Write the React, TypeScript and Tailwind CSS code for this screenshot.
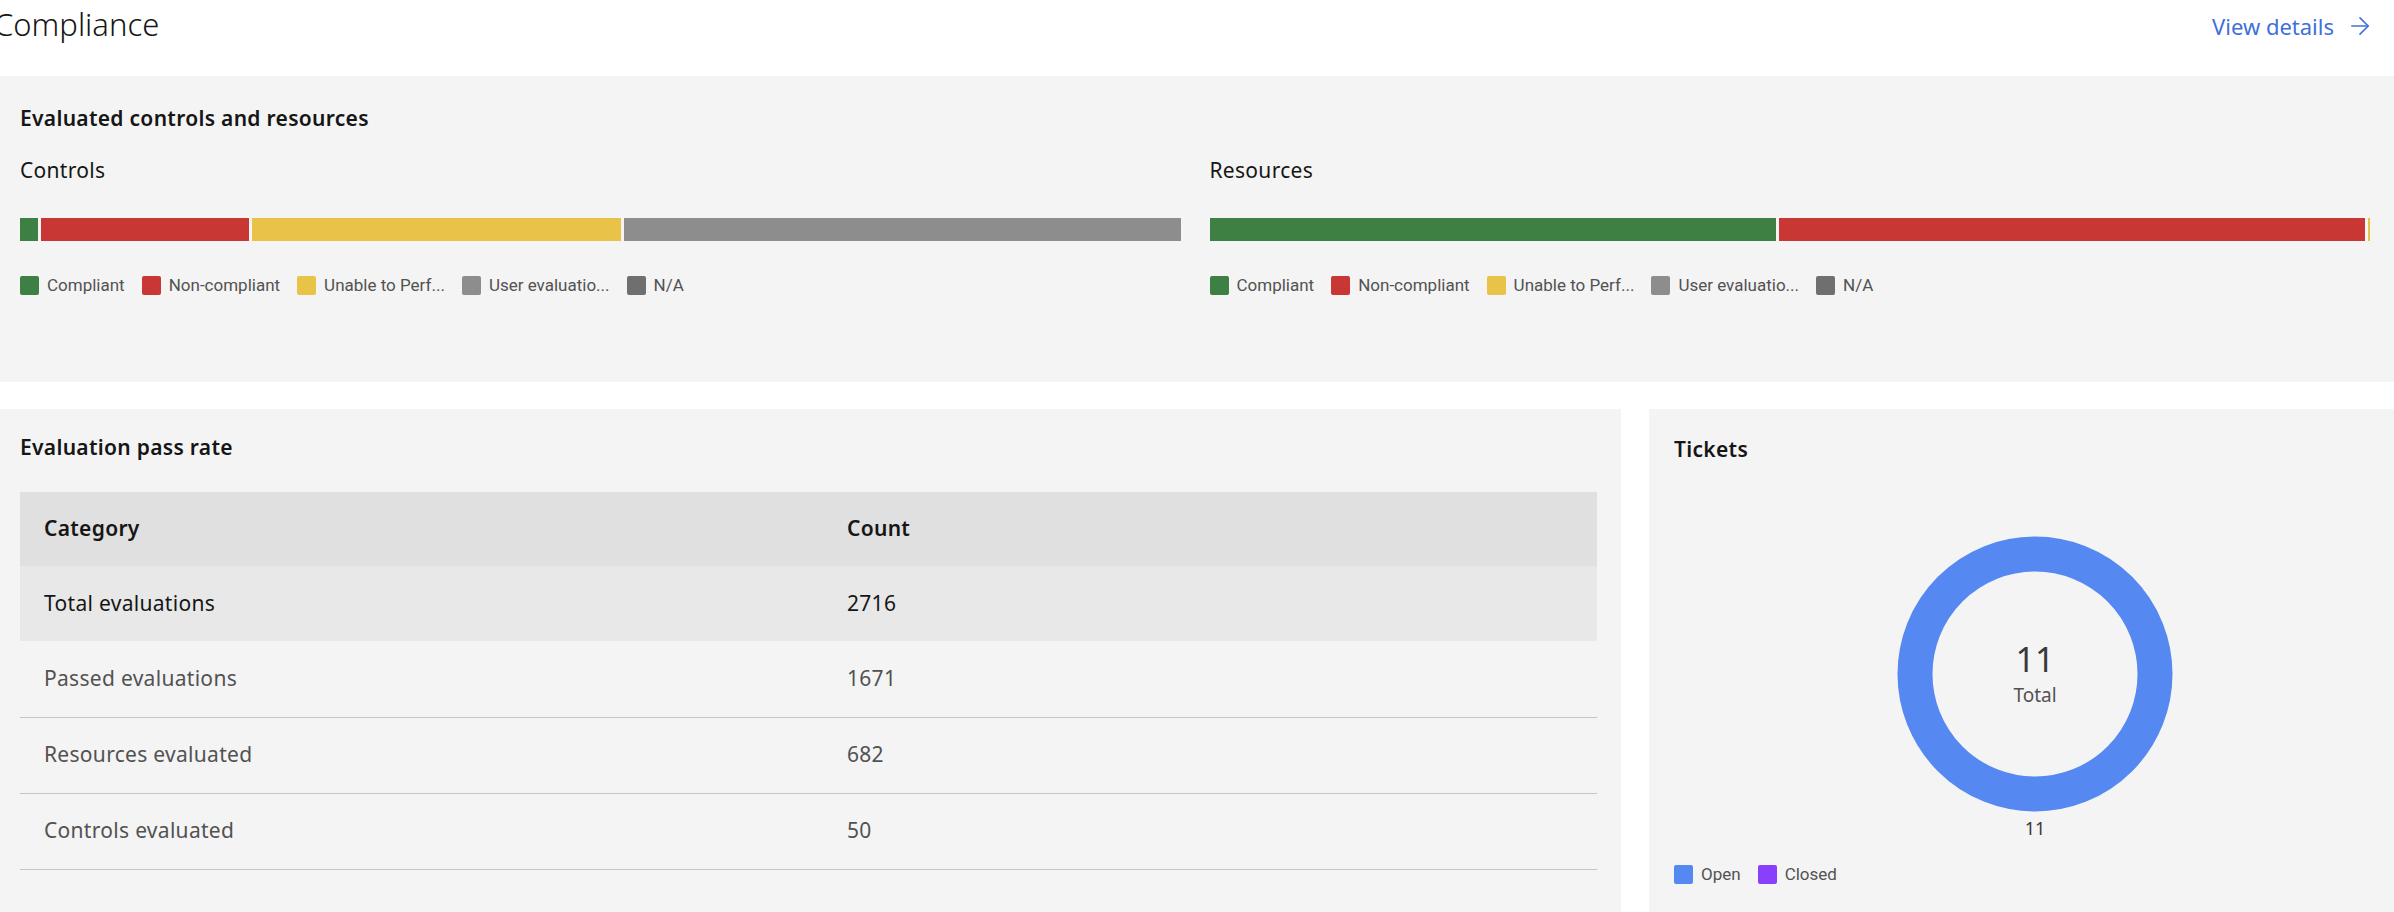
import { ArrowRight } from "lucide-react";

interface Segment {
  color: string;
  width: number;
}

const legend = [
  { label: "Compliant", color: "bg-[#3e7f43]" },
  { label: "Non-compliant", color: "bg-[#c93735]" },
  { label: "Unable to Perf...", color: "bg-[#e9c348]" },
  { label: "User evaluatio...", color: "bg-[#8d8d8d]" },
  { label: "N/A", color: "bg-[#6f6f6f]" },
];

const controls: Segment[] = [
  { color: "#3e7f43", width: 18 },
  { color: "#c93735", width: 208 },
  { color: "#e9c348", width: 369 },
  { color: "#8d8d8d", width: 556 },
];

const resources: Segment[] = [
  { color: "#3e7f43", width: 568 },
  { color: "#c93735", width: 587 },
  { color: "#e9c348", width: 2 },
];

const rows = [
  { category: "Passed evaluations", count: "1671" },
  { category: "Resources evaluated", count: "682" },
  { category: "Controls evaluated", count: "50" },
];

function StackedBar({ title, segments }: { title: string; segments: Segment[] }) {
  return (
    <div>
      <h3 className="text-[21px] leading-[26px] tracking-[0.3px] text-[#161616]">{title}</h3>
      <div className="mt-[35px] flex h-[23px] gap-[3px]">
        {segments.map((s, i) => (
          <div key={i} className="h-full" style={{ backgroundColor: s.color, flexGrow: s.width, flexBasis: 0 }} />
        ))}
      </div>
      <div className="mt-[34px] flex items-center gap-[17px] font-['Roboto',sans-serif]">
        {legend.map((l) => (
          <div key={l.label} className="flex items-center gap-[8px]">
            <span className={`h-[19px] w-[19px] rounded-[2px] ${l.color}`} />
            <span className="text-[17px] leading-[20px] text-[#525252]">{l.label}</span>
          </div>
        ))}
      </div>
    </div>
  );
}

export default function App() {
  return (
    <div className="h-[912px] w-[2394px] overflow-hidden bg-white font-['Noto_Sans',sans-serif]">
      {/* header */}
      <div className="flex h-[76px] items-start justify-between pr-[20px]">
        <h1 className="ml-[-6px] mt-[5px] text-[31px] font-light leading-[38px] text-[#161616]">Compliance</h1>
        <a className="mt-[11px] flex items-center gap-[12px] text-[22px] leading-[30px] text-[#4070d8]">
          View details
          <ArrowRight size={28} strokeWidth={1.4} />
        </a>
      </div>

      {/* evaluated controls and resources */}
      <div className="h-[306px] bg-[#f4f4f4] pl-[20px] pr-[24px] pt-[29px]">
        <h2 className="text-[21px] font-semibold leading-[26px] tracking-[0.3px] text-[#161616]">
          Evaluated controls and resources
        </h2>
        <div className="mt-[26px] grid grid-cols-2 gap-[29px]">
          <StackedBar title="Controls" segments={controls} />
          <StackedBar title="Resources" segments={resources} />
        </div>
      </div>

      <div className="mt-[27px] flex gap-[28px]">
        {/* pass rate */}
        <div className="h-[560px] w-[1621px] shrink-0 bg-[#f4f4f4] pl-[20px] pr-[24px] pt-[25px]">
          <h2 className="text-[21px] font-semibold leading-[26px] tracking-[0.3px] text-[#161616]">Evaluation pass rate</h2>
          <table className="mt-[32px] w-full border-collapse text-[21px] tracking-[0.3px]">
            <thead>
              <tr className="h-[74px] bg-[#e0e0e0] text-left text-[#161616]">
                <th className="w-[803px] pl-[24px] font-semibold">Category</th>
                <th className="pl-[24px] font-semibold">Count</th>
              </tr>
            </thead>
            <tbody>
              <tr className="h-[75px] bg-[#e8e8e8] text-[#161616]">
                <td className="pl-[24px]">Total evaluations</td>
                <td className="pl-[24px]">2716</td>
              </tr>
              {rows.map((r) => (
                <tr key={r.category} className="h-[76px] border-b border-[#c6c6c6] text-[#525252]">
                  <td className="pl-[24px]">{r.category}</td>
                  <td className="pl-[24px]">{r.count}</td>
                </tr>
              ))}
            </tbody>
          </table>
        </div>

        {/* tickets */}
        <div className="h-[560px] flex-1 bg-[#f4f4f4] pl-[25px] pt-[27px]">
          <h2 className="text-[21px] font-semibold leading-[26px] tracking-[0.3px] text-[#161616]">Tickets</h2>
          <div className="ml-[221px] mt-[72px] flex w-[280px] flex-col items-center">
            <div className="relative h-[280px] w-[280px]">
              <svg width="280" height="280" viewBox="0 0 280 280">
                <circle cx="140" cy="140" r="120" fill="none" stroke="#5589f1" strokeWidth="35" />
              </svg>
              <div className="absolute inset-0 flex flex-col items-center justify-center">
                <span className="mt-[-2px] text-[34px] leading-[40px] text-[#393939]">11</span>
                <span className="mt-[4px] text-[19px] leading-[24px] text-[#525252]">Total</span>
              </div>
            </div>
            <span className="mt-[3px] text-[18px] leading-[22px] text-[#393939]">11</span>
          </div>
          <div className="mt-[25px] flex items-center gap-[17px] font-['Roboto',sans-serif]">
            <div className="flex items-center gap-[8px]">
              <span className="h-[19px] w-[19px] rounded-[2px] bg-[#5589f1]" />
              <span className="text-[17px] leading-[20px] text-[#525252]">Open</span>
            </div>
            <div className="flex items-center gap-[8px]">
              <span className="h-[19px] w-[19px] rounded-[2px] bg-[#8a3ffc]" />
              <span className="text-[17px] leading-[20px] text-[#525252]">Closed</span>
            </div>
          </div>
        </div>
      </div>
    </div>
  );
}
